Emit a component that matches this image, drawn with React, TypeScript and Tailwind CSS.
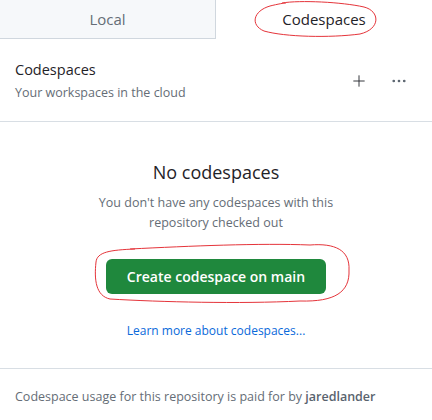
import { Plus, Ellipsis } from "lucide-react";

export default function App() {
  return (
    <div className="relative w-[432px] h-[420px] bg-white text-[#1f2328] font-['Open_Sans',sans-serif] overflow-hidden">
      {/* TABS */}
      <div className="flex h-[39px]">
        <div className="w-[216px] flex items-center justify-center bg-[#f6f8fa] border-r border-b border-[#d0d7de] text-[15px] text-[#656d76]">
          Local
        </div>
        <div className="flex-1 flex items-center justify-center text-[15px] text-[#1f2328]">
          Codespaces
        </div>
      </div>

      {/* HEADER */}
      <div className="flex items-center justify-between px-[15px] pt-[20px] pb-[18px] border-b border-[#d8dee4]">
        <div>
          <div className="text-[14.5px] leading-[22px]">Codespaces</div>
          <div className="mt-[2px] text-[12.5px] leading-[20px] text-[#656d76]">Your workspaces in the cloud</div>
        </div>
        <div className="flex items-center gap-[22px] pr-[9px] text-[#1f2328]">
          <Plus size={18} strokeWidth={1.2} />
          <Ellipsis size={18} strokeWidth={1.6} className="text-[#59636e]" />
        </div>
      </div>

      {/* EMPTY STATE */}
      <div className="flex flex-col items-center pt-[37px] pb-[28px] border-b border-[#d8dee4] text-center">
        <h2 className="text-[18px] leading-[26px] font-normal">No codespaces</h2>
        <p className="mt-[8px] w-[270px] text-[12.5px] leading-[20px] text-[#656d76]">
          You don't have any codespaces with this repository checked out
        </p>
        <button className="mt-[26px] h-[35px] w-[220px] rounded-[6px] bg-[#1f883d] text-white text-[14px] font-semibold">
          Create codespace on main
        </button>
        <a className="mt-[28px] text-[12px] leading-[18px] text-[#0969da]">Learn more about codespaces...</a>
      </div>

      {/* FOOTER */}
      <div className="px-[15px] pt-[19px] text-[12.5px] text-[#656d76]">
        Codespace usage for this repository is paid for by <span className="font-semibold text-[#59636e]">jaredlander</span>
      </div>

      {/* ANNOTATIONS */}
      <svg className="absolute inset-0 pointer-events-none" width="432" height="420" viewBox="0 0 432 420" fill="none">
        <path
          d="M282 3 C300 0 342 2 364 7 C380 11 381 29 360 34 C330 38 285 37 264 31 C250 25 253 11 270 6 C278 4 284 3 286 3"
          stroke="#e5343a"
          strokeWidth="1"
        />
        <path
          d="M130 249 C190 246 260 243 310 245 C335 243 350 250 349 270 C350 292 335 302 300 301 C240 304 160 302 110 299 C96 296 94 280 96 262 C97 252 110 250 135 249"
          stroke="#e5343a"
          strokeWidth="1"
        />
      </svg>
    </div>
  );
}
